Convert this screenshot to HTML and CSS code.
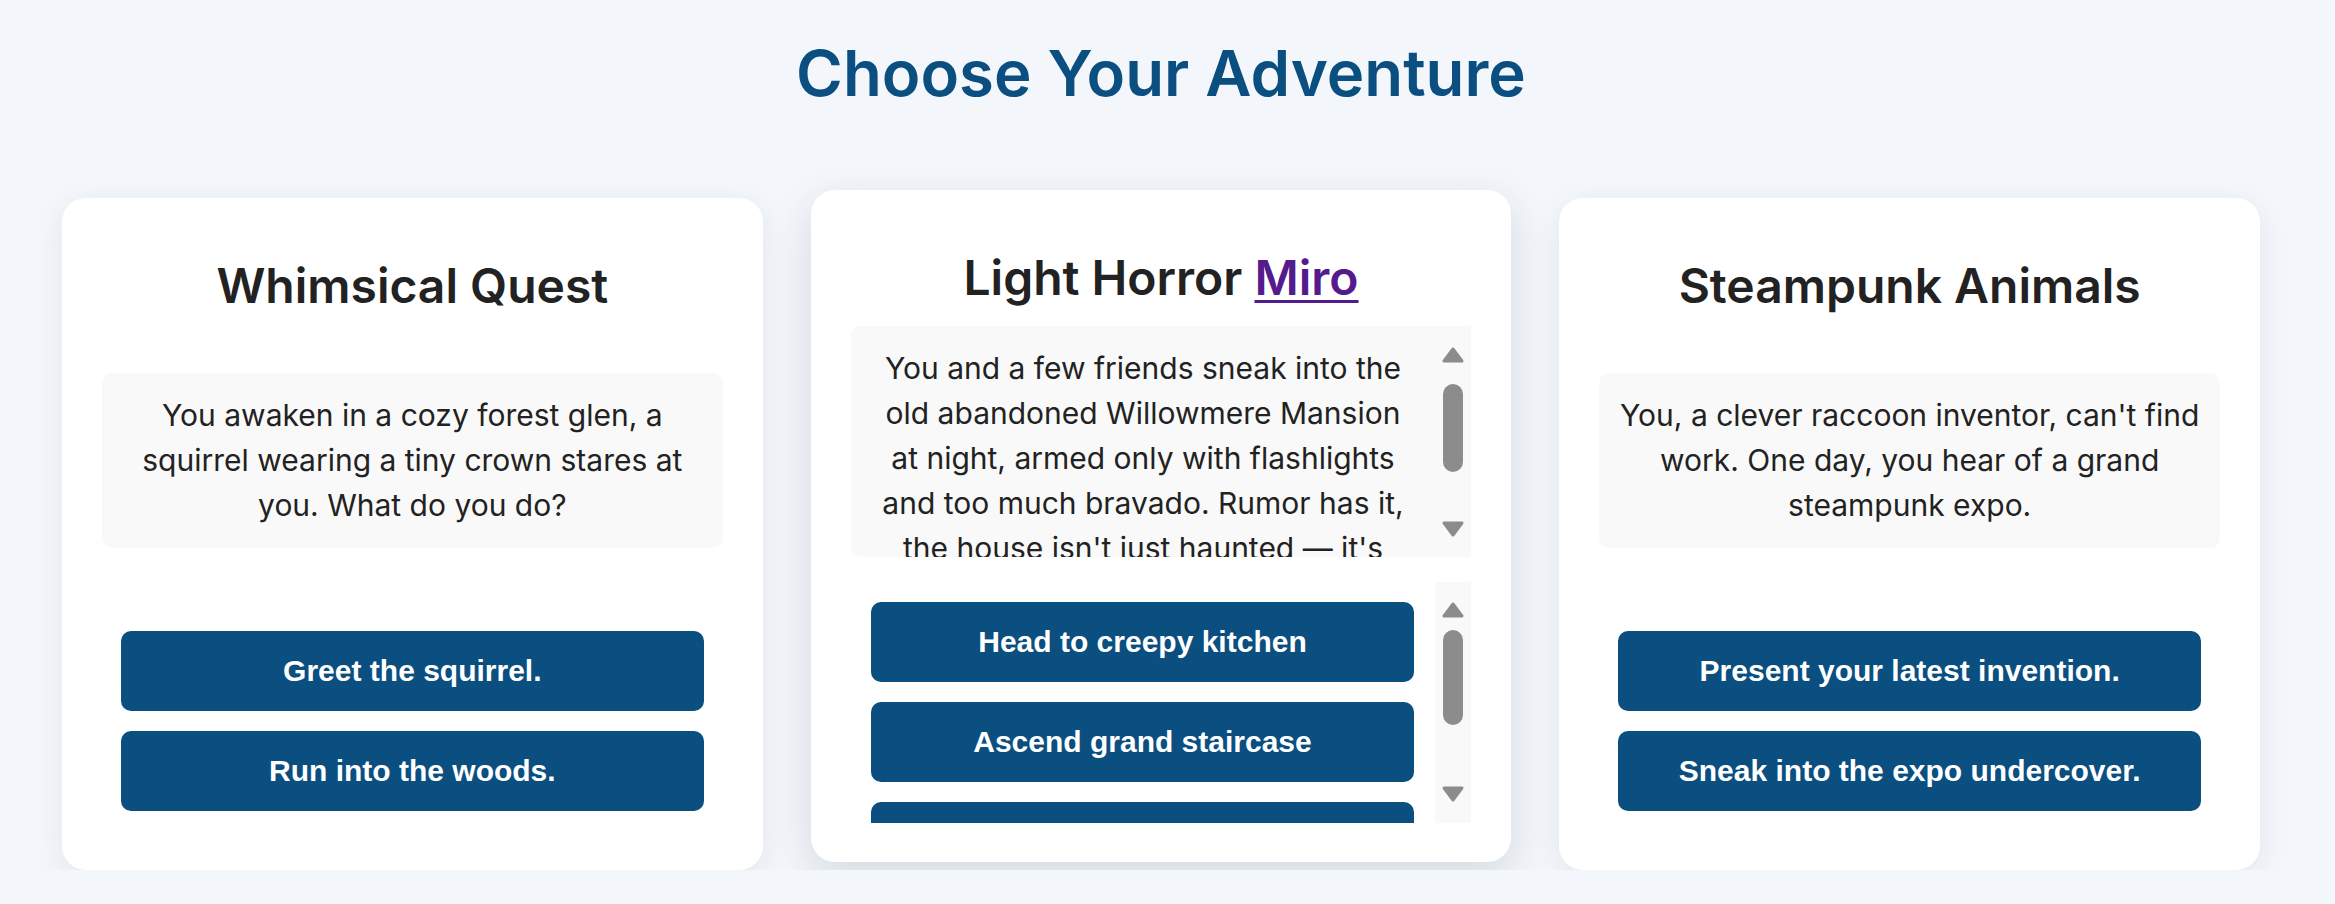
FILE: index.html
```html
<!DOCTYPE html>
<html lang="en">
<head>
<meta charset="utf-8">
<title>Choose Your Adventure</title>
<link rel="stylesheet" href="styles.css">
</head>
<body>
<main class="page">
  <h1 class="page-title">Choose Your Adventure</h1>
  <div class="cards">
    <section class="card">
      <h2 class="card-title">Whimsical Quest</h2>
      <div class="story">
        <p class="story-text">You awaken in a cozy forest glen, a squirrel wearing a tiny crown stares at you. What do you do?</p>
      </div>
      <div class="choices">
        <div class="choice-list">
          <button class="choice" type="button">Greet the squirrel.</button>
          <button class="choice" type="button">Run into the woods.</button>
        </div>
      </div>
    </section>

    <section class="card card--active">
      <h2 class="card-title">Light Horror <a class="card-link" href="#">Miro</a></h2>
      <div class="story story--scroll">
        <p class="story-text">You and a few friends sneak into the old abandoned Willowmere Mansion at night, armed only with flashlights and too much bravado. Rumor has it, the house isn't just haunted — it's</p>
        <div class="scrollbar scrollbar--story" aria-hidden="true">
          <svg class="scroll-arrow" viewBox="0 0 24 18" width="24" height="18"><path d="M12 3 L21 15 L3 15 Z"/></svg>
          <div class="scroll-thumb scroll-thumb--story"></div>
          <svg class="scroll-arrow scroll-arrow--down" viewBox="0 0 24 18" width="24" height="18"><path d="M12 15 L21 3 L3 3 Z"/></svg>
        </div>
      </div>
      <div class="choices choices--scroll">
        <div class="choice-list">
          <button class="choice" type="button">Head to creepy kitchen</button>
          <button class="choice" type="button">Ascend grand staircase</button>
          <button class="choice" type="button" aria-hidden="true"></button>
        </div>
        <div class="scrollbar scrollbar--choices" aria-hidden="true">
          <svg class="scroll-arrow" viewBox="0 0 24 18" width="24" height="18"><path d="M12 3 L21 15 L3 15 Z"/></svg>
          <div class="scroll-thumb scroll-thumb--choices"></div>
          <svg class="scroll-arrow scroll-arrow--down" viewBox="0 0 24 18" width="24" height="18"><path d="M12 15 L21 3 L3 3 Z"/></svg>
        </div>
      </div>
    </section>

    <section class="card">
      <h2 class="card-title">Steampunk Animals</h2>
      <div class="story">
        <p class="story-text">You, a clever raccoon inventor, can't find work. One day, you hear of a grand steampunk expo.</p>
      </div>
      <div class="choices">
        <div class="choice-list">
          <button class="choice" type="button">Present your latest invention.</button>
          <button class="choice" type="button">Sneak into the expo undercover.</button>
        </div>
      </div>
    </section>
  </div>
</main>
</body>
</html>
```

FILE: styles.css
```css
* {
  box-sizing: border-box;
}

html,
body {
  margin: 0;
  background: #f3f6fa;
}

body {
  font-family: Inter, "Noto Sans", sans-serif;
  color: #222222;
}

.page {
  padding: 34px 13px 0 0;
}

.page-title {
  margin: 0 0 87px;
  font-size: 63.5px;
  font-weight: 600;
  line-height: 77px;
  color: #0b4e80;
  text-align: center;
}

.cards {
  display: grid;
  grid-template-columns: repeat(3, 1fr);
  max-width: 2198px;
  margin: 0 auto;
  gap: 48px;
  align-items: stretch;
}

.card {
  display: flex;
  flex-direction: column;
  justify-content: space-between;
  padding: 40px 40px 39px;
  background: #ffffff;
  border-radius: 24px;
  box-shadow: 0 8px 30px rgba(40, 60, 100, 0.08);
}

.card--active {
  transform: translateY(-8px);
  box-shadow: 0 14px 40px rgba(40, 60, 100, 0.15);
}

.card-title {
  margin: 19px 0;
  font-size: 48px;
  font-weight: 600;
  line-height: 58px;
  text-align: center;
  color: #222222;
}

.card-link {
  color: #551a8b;
  text-decoration: underline;
  text-decoration-thickness: 3px;
  text-underline-offset: 5px;
}

.story {
  display: flex;
  margin-bottom: 25px;
  background: #f9f9f9;
  border-radius: 10px;
}

.story-text {
  flex: 1;
  margin: 0;
  padding: 20px;
  font-size: 30px;
  line-height: 45px;
  text-align: center;
}

.story--scroll {
  height: 231px;
  overflow: hidden;
  border-radius: 10px 0 0 10px;
}

.story--scroll .story-text {
  min-width: 0;
}

.choices {
  display: flex;
}

.choice-list {
  flex: 1;
  display: flex;
  flex-direction: column;
  gap: 20px;
  padding: 20px 19px;
  min-width: 0;
}

.choices--scroll {
  height: 241px;
  overflow: hidden;
}

.choices--scroll .choice-list {
  padding: 20px 21px 20px 20px;
}

.choice {
  flex: none;
  display: block;
  width: 100%;
  height: 80px;
  padding: 0 20px;
  border: 0;
  border-radius: 10px;
  background: #0b4e80;
  color: #ffffff;
  font-family: "Liberation Sans", Arial, sans-serif;
  font-weight: 700;
  font-size: 30px;
  line-height: 34px;
  cursor: pointer;
}

.scrollbar {
  flex: none;
  width: 36px;
  display: flex;
  flex-direction: column;
  align-items: center;
  background: #f9f9f9;
}

.scrollbar--story {
  padding: 20px 0 19px;
}

.scrollbar--choices {
  padding: 19px 0 20px;
}

.scroll-arrow {
  display: block;
  flex: none;
  fill: #8c8c8c;
  stroke: #8c8c8c;
  stroke-width: 3;
  stroke-linejoin: round;
}

.scroll-arrow--down {
  margin-top: auto;
}

.scroll-thumb {
  flex: none;
  width: 20px;
  border-radius: 10px;
  background: #8c8c8c;
}

.scroll-thumb--story {
  margin-top: 20px;
  height: 88px;
}

.scroll-thumb--choices {
  margin-top: 11px;
  height: 95px;
}
```
